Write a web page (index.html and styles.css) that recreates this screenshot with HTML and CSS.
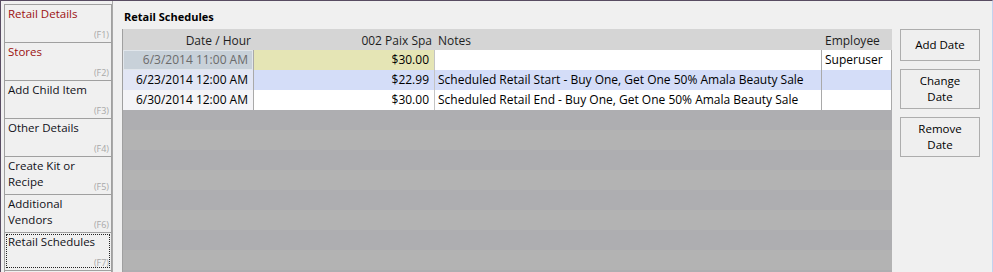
FILE: index.html
```html
<!DOCTYPE html>
<html lang="en">
<head>
    <meta charset="UTF-8">
    <title>Retail Schedules</title>
    <link rel="stylesheet" href="styles.css">
</head>
<body>
    <div class="window">
        <nav class="tabs">
            <div class="tab tab-filled"><span class="tab-label">Retail Details</span><span class="tab-key">(F1)</span></div>
            <div class="tab tab-filled"><span class="tab-label">Stores</span><span class="tab-key">(F2)</span></div>
            <div class="tab"><span class="tab-label">Add Child Item</span><span class="tab-key">(F3)</span></div>
            <div class="tab"><span class="tab-label">Other Details</span><span class="tab-key">(F4)</span></div>
            <div class="tab"><span class="tab-label">Create Kit or Recipe</span><span class="tab-key">(F5)</span></div>
            <div class="tab"><span class="tab-label">Additional Vendors</span><span class="tab-key">(F6)</span></div>
            <div class="tab tab-active"><span class="tab-label">Retail Schedules</span><span class="tab-key">(F7)</span></div>
            <div class="tab"></div>
        </nav>

        <section class="panel">
            <h2 class="panel-title">Retail Schedules</h2>
            <div class="panel-body">
                <div class="grid">
                    <div class="grid-row grid-head">
                        <div class="cell right">Date / Hour</div>
                        <div class="cell right">002 Paix Spa</div>
                        <div class="cell">Notes</div>
                        <div class="cell">Employee</div>
                    </div>
                    <div class="grid-row">
                        <div class="cell right date cell-current">6/3/2014 11:00 AM</div>
                        <div class="cell right price cell-price">$30.00</div>
                        <div class="cell notes"></div>
                        <div class="cell">Superuser</div>
                    </div>
                    <div class="grid-row row-selected">
                        <div class="cell right date">6/23/2014 12:00 AM</div>
                        <div class="cell right price">$22.99</div>
                        <div class="cell notes">Scheduled Retail Start - Buy One, Get One 50% Amala Beauty Sale</div>
                        <div class="cell"></div>
                    </div>
                    <div class="grid-row">
                        <div class="cell right date">6/30/2014 12:00 AM</div>
                        <div class="cell right price">$30.00</div>
                        <div class="cell notes">Scheduled Retail End - Buy One, Get One 50% Amala Beauty Sale</div>
                        <div class="cell"></div>
                    </div>
                    <div class="grid-empty"></div>
                </div>

                <div class="actions">
                    <button class="btn btn-short">Add Date</button>
                    <button class="btn">Change<br>Date</button>
                    <button class="btn">Remove<br>Date</button>
                </div>
            </div>
        </section>
    </div>
</body>
</html>
```

FILE: styles.css
```css
/* whole window */
* {
    box-sizing: border-box;
}

body {
    margin: 0;
    background: #f0f0f0;
    font-family: 'Open Sans', 'Noto Sans', sans-serif;
    font-size: 11px;
    color: #000;
    overflow: hidden;
}

.window {
    display: flex;
    width: 993px;
    height: 272px;
    border-top: 1px solid #584c62;
    border-left: 1px solid #584c62;
    border-right: 1px solid #c3d2ef;
    overflow: hidden;
}

/* left tab strip */
.tabs {
    width: 112px;
    flex-shrink: 0;
    padding: 3px 0 0 3px;
    border-right: 1px solid #a9a9a9;
}

/* label and key share one cell: key sits bottom right */
.tab {
    display: grid;
    grid-template-columns: 1fr;
    grid-template-rows: 1fr;
    width: 108px;
    height: 38px;
    padding: 1px 2px 2px 3px;
    border: 1px solid #a0a0a0;
    border-bottom: none;
    font-size: 11.5px;
    line-height: 16px;
    color: #101018;
}

.tab-label,
.tab-key {
    grid-area: 1 / 1;
}

.tab-label {
    align-self: start;
    max-width: 94px;
}

.tab-key {
    align-self: end;
    justify-self: end;
    font-size: 9px;
    line-height: 10px;
    color: #a8a8a8;
}

.tab-filled .tab-label {
    color: #9c1010;
}

.tab-active {
    outline: 1px dotted #222;
    outline-offset: -3px;
}

/* right side */
.panel {
    flex: 1;
    display: flex;
    flex-direction: column;
    padding-left: 9px;
}

.panel-title {
    margin: 0;
    height: 28px;
    padding: 8px 0 0 2px;
    font-size: 11px;
    line-height: 16px;
    font-weight: bold;
}

.panel-body {
    flex: 1;
    display: flex;
    gap: 8px;
    min-height: 0;
}

/* data grid */
.grid {
    width: 770px;
    display: flex;
    flex-direction: column;
    border-left: 1px solid #a0a0a0;
    background: #fff;
    font-size: 12px;
}

.grid-row {
    display: grid;
    grid-template-columns: 131px 181px 387px 70px;
    height: 20px;
    line-height: 20px;
}

.cell {
    padding: 0 3px;
    white-space: nowrap;
    overflow: hidden;
    border-right: 1px solid #a9a9a9;
}

.cell.right {
    text-align: right;
    padding-right: 5px;
}

.cell.price {
    border-right-color: #c4c4c4;
}

.grid-head {
    height: 21px;
    line-height: 16px;
    background: #d5d5d5;
    color: #1e1e1e;
}

.grid-head .cell {
    border-right: none;
    padding-top: 4px;
}

.grid-head .cell.right {
    padding-right: 3px;
}

.cell.date {
    background: #f4f4f7;
}

.cell-current.date {
    background: #c8d1d9;
    box-shadow: inset 0 0 0 1px #e1e6eb;
    color: #6b6b6b;
}

.cell-price {
    background: #e5e5b5;
}

.row-selected {
    background: #d4ddf8;
}

.row-selected .cell.date {
    background: #e2e6f5;
}

.grid-empty {
    flex: 1;
    background: repeating-linear-gradient(to bottom, #aeaeb1 0, #aeaeb1 20px, #b3b3b3 20px, #b3b3b3 40px);
}

/* buttons */
.actions {
    display: flex;
    flex-direction: column;
    gap: 8px;
}

.btn {
    width: 80px;
    height: 40px;
    padding: 0;
    background: #efefef;
    border: 1px solid #adadad;
    font-family: inherit;
    font-size: 11.5px;
    line-height: 16px;
    color: #000;
}

.btn-short {
    height: 32px;
}
```
